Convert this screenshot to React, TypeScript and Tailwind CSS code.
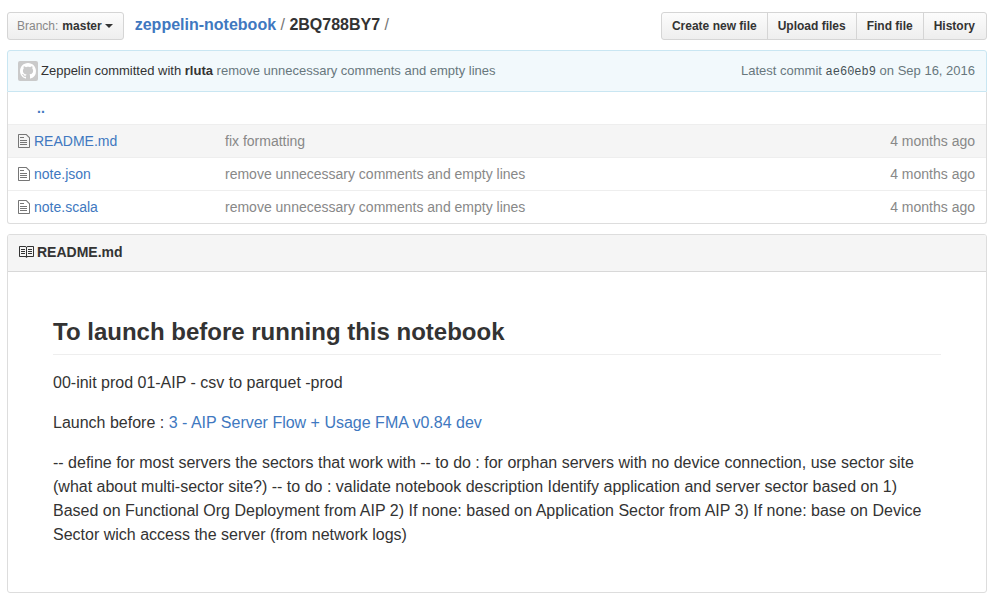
const files = [
  { name: "README.md", message: "fix formatting", age: "4 months ago", active: true },
  { name: "note.json", message: "remove unnecessary comments and empty lines", age: "4 months ago", active: false },
  { name: "note.scala", message: "remove unnecessary comments and empty lines", age: "4 months ago", active: false },
];

const actions = ["Create new file", "Upload files", "Find file", "History"];

function FileIcon() {
  return (
    <svg className="block h-4 w-3 fill-[#767676]" viewBox="0 0 12 16" aria-hidden="true">
      <path d="M6 5H2V4h4v1zM2 8h7V7H2v1zm0 2h7V9H2v1zm0 2h7v-1H2v1zm10-7.5V14c0 .55-.45 1-1 1H1c-.55 0-1-.45-1-1V2c0-.55.45-1 1-1h7.5L12 4.5zM11 5L8 2H1v12h10V5z" />
    </svg>
  );
}

function BookIcon() {
  return (
    <svg className="block size-4 fill-[#333333]" viewBox="0 0 16 16" aria-hidden="true">
      <path d="M3 5h4v1H3V5zm0 3h4V7H3v1zm0 2h4V9H3v1zm11-5h-4v1h4V5zm0 2h-4v1h4V7zm0 2h-4v1h4V9zm2-6v9c0 .55-.45 1-1 1H9.5l-1 1-1-1H2c-.55 0-1-.45-1-1V3c0-.55.45-1 1-1h5.5l1 1 1-1H15c.55 0 1 .45 1 1zm-8 .5L7.5 3H2v9h6V3.5zm7-.5H9.5l-.5.5V12h6V3z" />
    </svg>
  );
}

function Avatar() {
  return (
    <svg className="block size-5" viewBox="0 0 20 20" aria-hidden="true">
      <rect width="20" height="20" rx="2" fill="#cacaca" />
      <path
        transform="translate(2 2)"
        fill="#ffffff"
        d="M8 0C3.58 0 0 3.58 0 8c0 3.54 2.29 6.53 5.47 7.59.4.07.55-.17.55-.38 0-.19-.01-.82-.01-1.49-2.01.37-2.53-.49-2.69-.94-.09-.23-.48-.94-.82-1.13-.28-.15-.68-.52-.01-.53.63-.01 1.08.58 1.23.82.72 1.21 1.87.87 2.33.66.07-.52.28-.87.51-1.07-1.78-.2-3.64-.89-3.64-3.95 0-.87.31-1.59.82-2.15-.08-.2-.36-1.02.08-2.12 0 0 .67-.21 2.2.82.64-.18 1.32-.27 2-.27.68 0 1.36.09 2 .27 1.53-1.04 2.2-.82 2.2-.82.44 1.1.16 1.92.08 2.12.51.56.82 1.27.82 2.15 0 3.07-1.87 3.75-3.65 3.95.29.25.54.73.54 1.48 0 1.07-.01 1.93-.01 2.2 0 .21.15.46.55.38A8.013 8.013 0 0 0 16 8c0-4.42-3.58-8-8-8z"
      />
    </svg>
  );
}

export default function App() {
  return (
    <main className="bg-white pt-3 pr-[18px] pb-2.5 pl-[7px] font-['Liberation_Sans',Arial,sans-serif] text-sm text-[#333333]">
      <header className="flex items-start justify-between">
        <div className="flex items-center gap-[11px]">
          <button
            type="button"
            aria-haspopup="menu"
            className="flex h-7 items-center rounded-[3px] border border-[#d5d5d5] bg-linear-to-b from-[#fcfcfc] to-[#eeeeee] pr-2.5 pl-[9px] text-xs font-bold"
          >
            <span className="font-normal text-[#888888]">Branch:</span>
            <span className="ml-1">master</span>
            <svg className="ml-[3px] h-1 w-2 fill-[#333333]" viewBox="0 0 8 4" aria-hidden="true">
              <path d="M0 0h8L4 4z" />
            </svg>
          </button>
          <nav aria-label="Breadcrumb" className="pb-0.5 text-base leading-6 text-[#767676]">
            <a href="#root" className="font-bold text-[#4078c0]">zeppelin-notebook</a>
            {" / "}
            <strong className="text-[#333333]">2BQ788BY7</strong>
            {" /"}
          </nav>
        </div>
        <div className="flex">
          {actions.map((label) => (
            <button
              key={label}
              type="button"
              className="-ml-px h-7 border border-[#d5d5d5] bg-linear-to-b from-[#fcfcfc] to-[#eeeeee] px-2.5 text-xs font-bold first:rounded-l-[3px] last:rounded-r-[3px] last:pr-[11px]"
            >
              {label}
            </button>
          ))}
        </div>
      </header>

      <section aria-label="Files" className="mt-2.5">
        <div className="flex items-center justify-between rounded-t-[3px] border border-[#c9e6f2] bg-[#f2f9fc] py-2.5 pr-[11px] pl-2.5 text-[13px] leading-5 text-[#68777d]">
          <div className="flex items-center gap-[3px]">
            <Avatar />
            <p>
              <span className="text-[#333333]">Zeppelin committed with <strong>rluta</strong></span>{" "}
              remove unnecessary comments and empty lines
            </p>
          </div>
          <p>
            Latest commit{" "}
            <a href="#commit" className="font-['Liberation_Mono',monospace] text-xs text-[#445055]">ae60eb9</a>
            {" on Sep 16, 2016"}
          </p>
        </div>
        <div className="rounded-b-[3px] border border-t-0 border-[#dddddd]">
          <table className="w-full border-collapse leading-5 text-[#888888]">
            <tbody>
              <tr className="h-8">
                <td className="w-[26px]" />
                <td colSpan={3} className="pl-[3px]">
                  <a href="#parent" className="font-bold text-[#4078c0]">..</a>
                </td>
              </tr>
              {files.map((file) => (
                <tr
                  key={file.name}
                  className={file.active ? "h-[33px] border-t border-[#eeeeee] bg-[#f5f5f5]" : "h-[33px] border-t border-[#eeeeee]"}
                >
                  <td className="w-[26px] pl-2.5"><FileIcon /></td>
                  <td className="w-[191px]">
                    <a href={"#" + file.name} className="text-[#4078c0]">{file.name}</a>
                  </td>
                  <td>{file.message}</td>
                  <td className="pr-[11px] text-right">{file.age}</td>
                </tr>
              ))}
            </tbody>
          </table>
        </div>
      </section>

      <section className="mt-2.5 rounded-[3px] border border-[#dddddd]">
        <h2 className="flex items-center gap-[3px] rounded-t-[2px] border-b border-[#d8d8d8] bg-[#f5f5f5] px-2.5 pt-2 pb-2.5 leading-[18px] font-bold">
          <BookIcon />
          README.md
        </h2>
        <article className="p-[45px] text-base leading-6">
          <h1 className="mb-4 border-b border-[#eeeeee] pb-[7px] text-2xl leading-[30px] font-bold">
            To launch before running this notebook
          </h1>
          <p className="mb-4">00-init prod 01-AIP - csv to parquet -prod</p>
          <p className="mb-4">
            Launch before : <a href="#flow" className="text-[#4078c0]">3 - AIP Server Flow + Usage FMA v0.84 dev</a>
          </p>
          <p>
            -- define for most servers the sectors that work with -- to do : for orphan servers with no device
            connection, use sector site (what about multi-sector site?) -- to do : validate notebook description
            Identify application and server sector based on 1) Based on Functional Org Deployment from AIP 2) If none:
            based on Application Sector from AIP 3) If none: base on Device Sector wich access the server (from network
            logs)
          </p>
        </article>
      </section>
    </main>
  );
}
